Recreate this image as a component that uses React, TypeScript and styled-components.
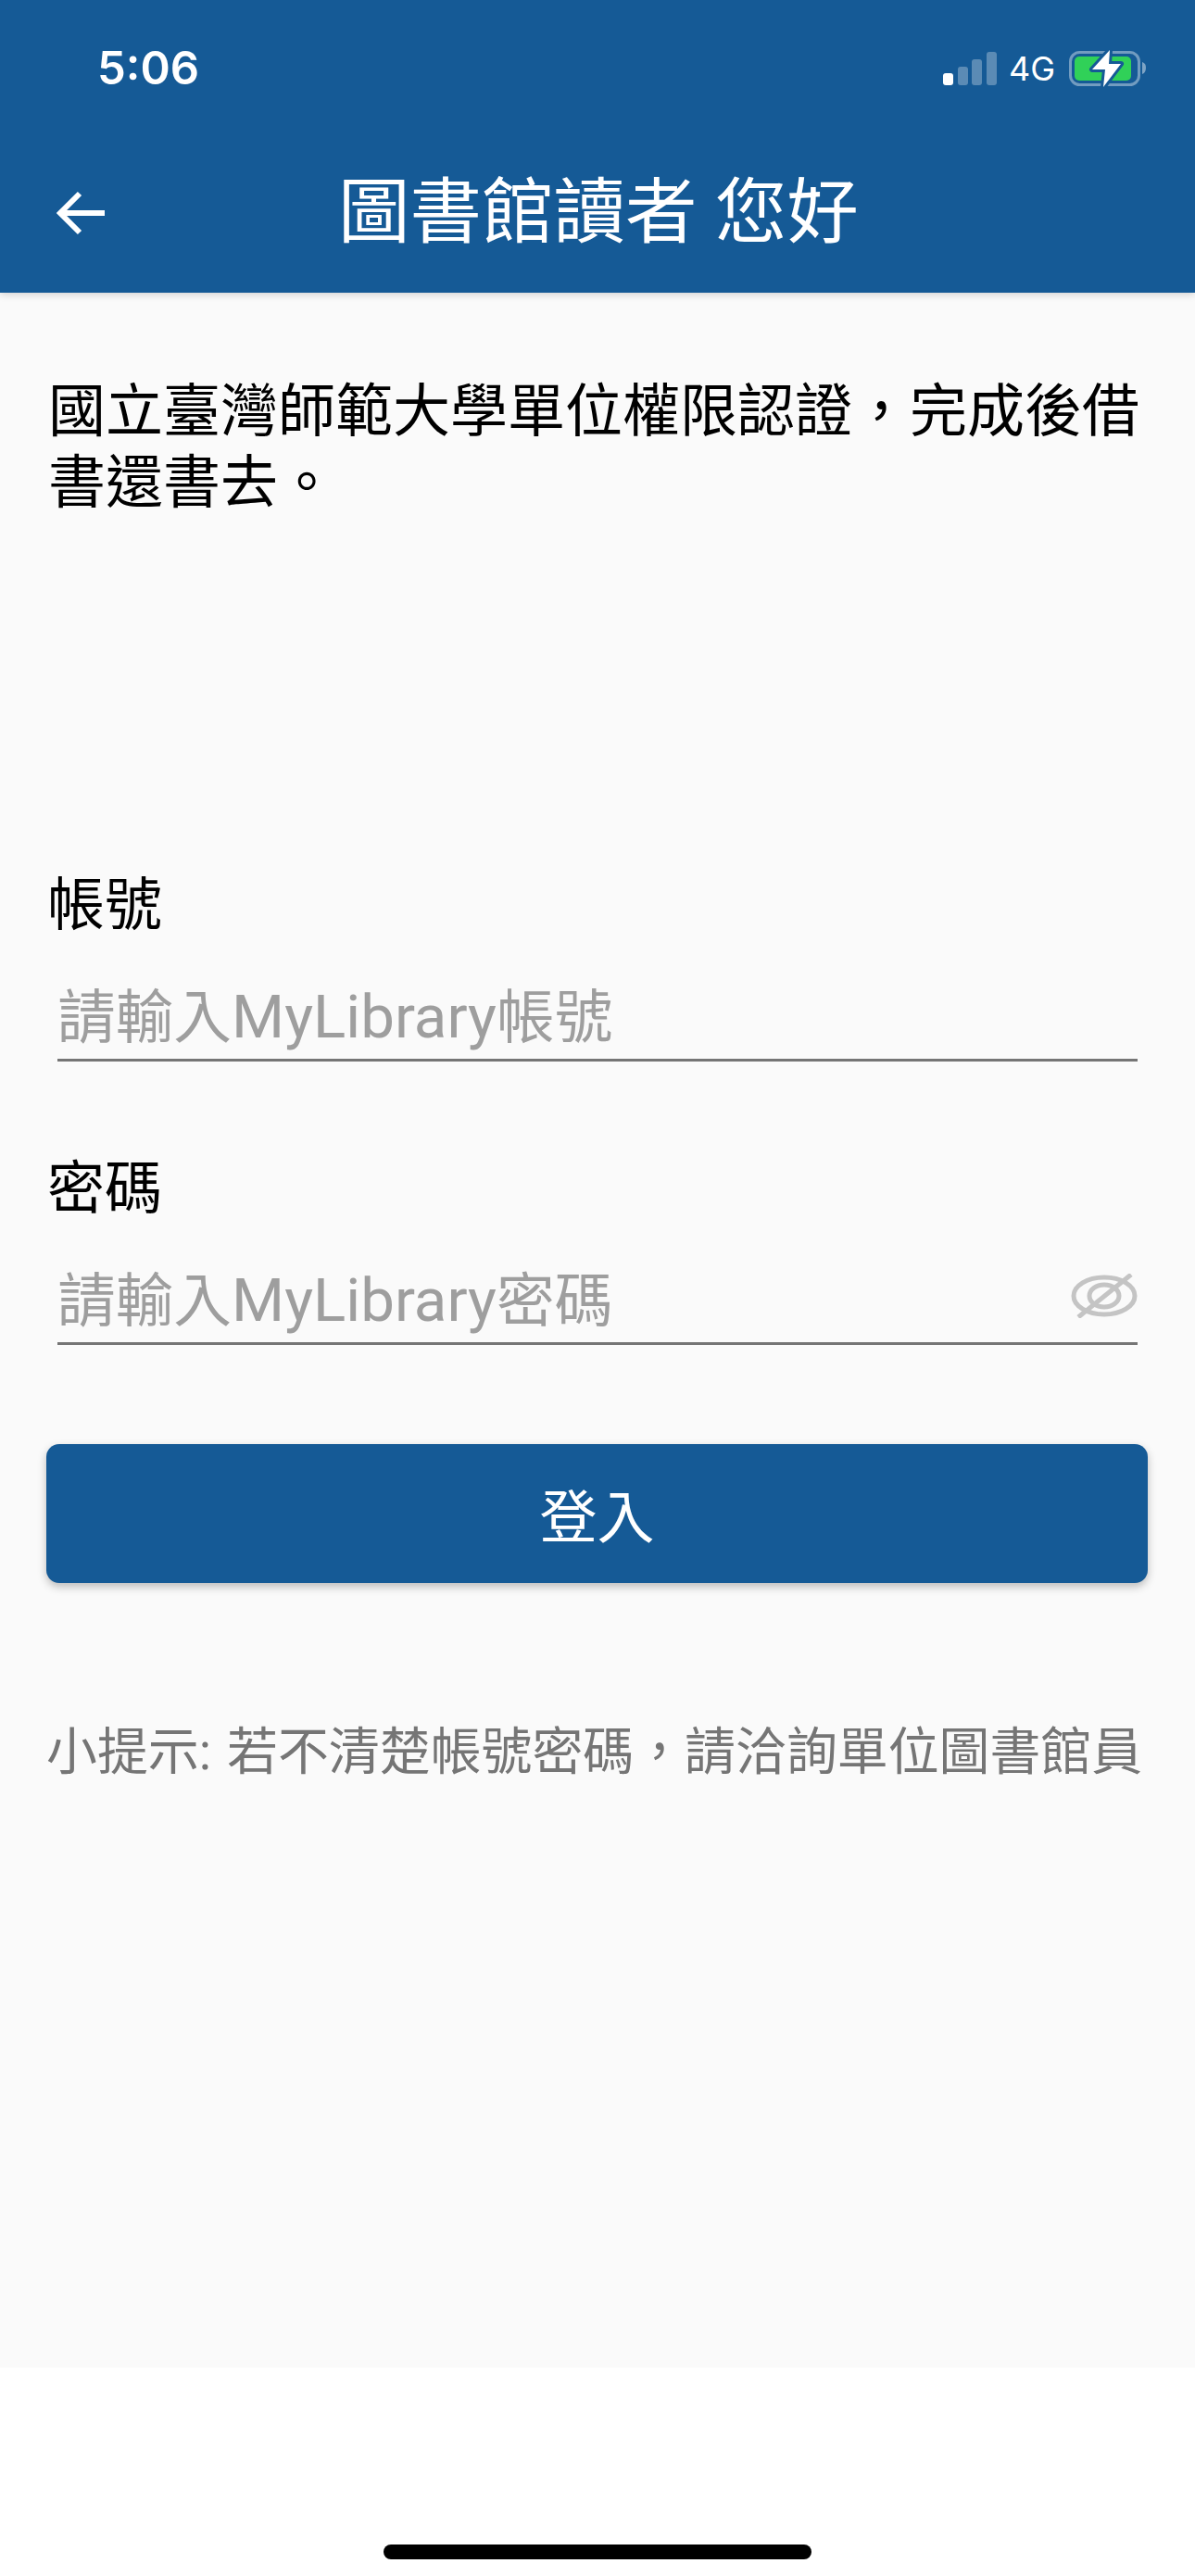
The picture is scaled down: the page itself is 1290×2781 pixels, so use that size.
import React from 'react';
import styled, { createGlobalStyle } from 'styled-components';

const PRIMARY = '#155a96';

const GlobalStyle = createGlobalStyle`
    html, body {
        margin: 0;
        padding: 0;
        background: #fff;
    }
    * {
        box-sizing: border-box;
    }
`
const Screen = styled.div`
    width: 1290px;
    height: 2781px;
    display: flex;
    flex-direction: column;
    background: #fff;
    font-family: Roboto, "Noto Sans CJK TC", sans-serif;
    overflow: hidden;
`
const Header = styled.header`
    height: 316px;
    flex-shrink: 0;
    background: ${PRIMARY};
    box-shadow: 0 2px 8px rgba(0, 0, 0, 0.16);
    color: #fff;
    position: relative;
`
const StatusBar = styled.div`
    height: 110px;
    padding: 52px 52px 0 105px;
    display: flex;
    justify-content: space-between;
    align-items: flex-start;
`
const Clock = styled.div`
    font-family: Inter, sans-serif;
    font-size: 49px;
    line-height: 44px;
    font-weight: 600;
`
const StatusIcons = styled.div`
    display: flex;
    align-items: center;
    height: 44px;
`
const NetworkLabel = styled.span`
    font-family: Inter, sans-serif;
    font-size: 36px;
    line-height: 44px;
    margin: 0 15px 0 13px;
`
const TitleBar = styled.div`
    height: 206px;
    display: flex;
    align-items: center;
    padding: 34px 0 0 61px;
`
const BackButton = styled.div`
    width: 55px;
    display: flex;
`
const Title = styled.h1`
    margin: 0 0 0 249px;
    font-size: 77.5px;
    line-height: 100px;
    font-weight: 400;
    white-space: nowrap;
`
const Main = styled.main`
    height: 2240px;
    flex-shrink: 0;
    background: #fafafa;
    display: flex;
    flex-direction: column;
    padding: 90px 50px 0 52px;
`
const Intro = styled.p`
    margin: 0;
    font-size: 62px;
    line-height: 77px;
    color: #000;
`
const Field = styled.div<{ $gap: number }>`
    margin-top: ${p => p.$gap}px;
    padding-right: 12px;
`
const Label = styled.div`
    margin-left: -1px;
    font-size: 62px;
    line-height: 76px;
    color: #000;
`
const InputRow = styled.div`
    margin: 26px 0 0 10px;
    height: 104px;
    border-bottom: 3px solid #757575;
    display: flex;
    align-items: center;
    justify-content: space-between;
    color: #9e9e9e;
`
const Placeholder = styled.span`
    padding-top: 11px;
    font-size: 62.7px;
    line-height: 80px;
`
const LatinText = styled.span`
    font-size: 65.4px;
`
const LoginButton = styled.button`
    display: block;
    width: 1189px;
    height: 150px;
    margin: 107px 0 0 -2px;
    border: none;
    border-radius: 14px;
    background: ${PRIMARY};
    color: #fff;
    font-family: inherit;
    font-size: 62px;
    box-shadow: 0 4px 10px rgba(0, 0, 0, 0.25);
`
const Hint = styled.p`
    margin: 147px 0 0 -2px;
    font-size: 54.9px;
    line-height: 70px;
    word-spacing: 3.5px;
    color: #757575;
    white-space: nowrap;
`
const HomeArea = styled.div`
    flex: 1;
    display: flex;
    justify-content: center;
    padding-top: 191px;
`
const HomeBar = styled.div`
    width: 462px;
    height: 16px;
    border-radius: 8px;
    background: #000;
`

const SignalIcon: React.FC = () => (
    <svg width="58" height="36" viewBox="0 0 58 36">
        <rect x="0" y="23" width="11" height="13" rx="3" fill="#fff" />
        <rect x="16" y="16" width="11" height="20" rx="3" fill="#fff" fillOpacity="0.3" />
        <rect x="31" y="8" width="11" height="28" rx="3" fill="#fff" fillOpacity="0.3" />
        <rect x="47" y="0" width="11" height="36" rx="3" fill="#fff" fillOpacity="0.3" />
    </svg>
);

const BatteryIcon: React.FC = () => (
    <svg width="84" height="42" viewBox="0 0 84 42">
        <rect x="1.5" y="3.5" width="74" height="35" rx="10" fill="none" stroke="#fff" strokeOpacity="0.4" strokeWidth="3" />
        <rect x="6" y="8" width="61" height="26" rx="5" fill="#30d158" />
        <path d="M79 14 C82 15 83 17 83 20 C83 23 82 26 79 27 Z" fill="#fff" fillOpacity="0.45" />
        <path d="M44 1 L25 22 L39 22 L37 41 L56 16 L43 16 Z" fill="#fff" stroke={PRIMARY} strokeWidth="6" paintOrder="stroke" strokeLinejoin="round" />
    </svg>
);

const BackIcon: React.FC = () => (
    <svg width="54" height="48" viewBox="0 0 54 48" fill="none" stroke="#fff" strokeWidth="6">
        <path d="M3 24 H52" />
        <path d="M25 3 L4 24 L25 45" />
    </svg>
);

const EyeOffIcon: React.FC = () => (
    <svg width="72" height="48" viewBox="0 0 72 48" fill="none" stroke="#c4c4c4" strokeWidth="5">
        <ellipse cx="36" cy="24" rx="33" ry="20" />
        <ellipse cx="36" cy="24" rx="16" ry="12" />
        <path d="M8 47 L65 1" />
    </svg>
);

const App: React.FC = () => {
    return <Screen>
        <GlobalStyle />
        <Header>
            <StatusBar>
                <Clock>5:06</Clock>
                <StatusIcons>
                    <SignalIcon />
                    <NetworkLabel>4G</NetworkLabel>
                    <BatteryIcon />
                </StatusIcons>
            </StatusBar>
            <TitleBar>
                <BackButton><BackIcon /></BackButton>
                <Title>圖書館讀者 您好</Title>
            </TitleBar>
        </Header>
        <Main>
            <Intro>國立臺灣師範大學單位權限認證，完成後借書還書去。</Intro>
            <Field $gap={380}>
                <Label>帳號</Label>
                <InputRow>
                    <Placeholder>請輸入<LatinText>MyLibrary</LatinText>帳號</Placeholder>
                </InputRow>
            </Field>
            <Field $gap={100}>
                <Label>密碼</Label>
                <InputRow>
                    <Placeholder>請輸入<LatinText>MyLibrary</LatinText>密碼</Placeholder>
                    <EyeOffIcon />
                </InputRow>
            </Field>
            <LoginButton>登入</LoginButton>
            <Hint>小提示: 若不清楚帳號密碼，請洽詢單位圖書館員</Hint>
        </Main>
        <HomeArea>
            <HomeBar />
        </HomeArea>
    </Screen>
}

export default App;
